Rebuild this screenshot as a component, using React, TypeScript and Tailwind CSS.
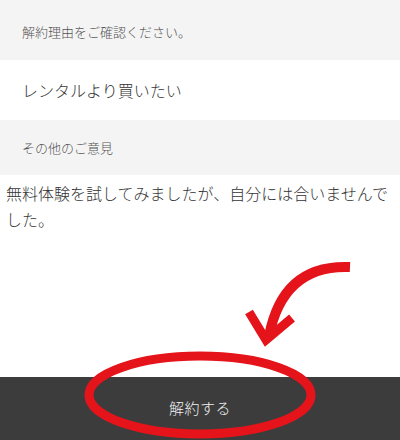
export default function App() {
  return (
    <div
      className="relative flex h-[440px] w-[400px] flex-col overflow-hidden bg-white font-light"
      style={{ fontFamily: '"Noto Sans CJK JP", "Noto Sans", sans-serif' }}
    >
      {/* Section heading */}
      <div className="flex h-[60px] items-center bg-[#f4f4f4] pl-[22px] pt-[4px] text-[13px] text-[#555]">
        解約理由をご確認ください。
      </div>

      {/* Selected reason */}
      <div className="flex h-[60px] items-center bg-white pl-[22px] text-[16px] text-[#333]">
        レンタルより買いたい
      </div>

      {/* Other comments heading */}
      <div className="flex h-[55px] items-center bg-[#f4f4f4] pl-[22px] text-[13px] text-[#555]">
        その他のご意見
      </div>

      {/* Comment body */}
      <div className="pl-[6px] pr-[6px] pt-[5px] text-[16px] leading-[26px] text-[#333]">
        無料体験を試してみましたが、自分には合いませんでした。
      </div>

      <div className="flex-1" />

      {/* Cancel button */}
      <div className="flex h-[63px] items-center justify-center bg-[#3c3c3c] text-[15px] tracking-[0.5px] text-[#f2f2f2]">
        解約する
      </div>

      {/* Red annotation */}
      <svg
        className="pointer-events-none absolute left-0 top-0"
        width="400"
        height="440"
        viewBox="0 0 400 440"
      >
        <ellipse
          cx="200"
          cy="395"
          rx="111"
          ry="39"
          fill="none"
          stroke="#e5141b"
          strokeWidth="9"
        />
        <path
          d="M350 267 Q 283 264 269 336"
          fill="none"
          stroke="#e5141b"
          strokeWidth="10"
        />
        <path
          d="M249 312 L266 340 L292 318"
          fill="none"
          stroke="#e5141b"
          strokeWidth="9"
          strokeLinejoin="miter"
        />
      </svg>
    </div>
  );
}
